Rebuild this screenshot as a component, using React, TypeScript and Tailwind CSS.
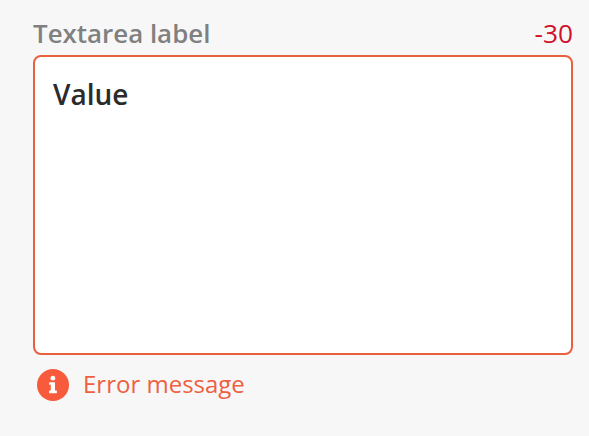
export default function App() {
  return (
    <main className="h-[436px] w-full bg-[#f7f7f7] pt-4 pl-[33px] pr-4 font-['Open_Sans',sans-serif]">
      <div className="flex h-[39px] items-start justify-between leading-9">
        <label htmlFor="message" className="-mt-px text-[25.9px] font-semibold text-[#808080]">Textarea label</label>
        <span className="-mt-px text-[26.3px] text-[#d0112b]">-30</span>
      </div>
      <textarea
        id="message"
        defaultValue="Value"
        className="block h-[300px] w-full resize-none rounded-lg border-2 border-[#e8603f] bg-white px-[18px] pt-[18px] text-[28px] leading-[38px] font-semibold text-[#2b2b2b] outline-none"
      />
      <div className="mt-[11px] flex items-start pl-1 text-[#ee5f42]">
        <svg className="mt-[3px] size-8" viewBox="0 0 32 32" aria-hidden="true">
          <circle cx="16" cy="16" r="16" fill="#f75b3b" />
          <circle cx="15.9" cy="9.2" r="2.4" fill="white" />
          <path d="M12.7 13.2H18v8.4h1.4q.5 0 .5.5v1.6q0 .5-.5.5h-6.8q-.5 0-.5-.5v-1.6q0-.5.5-.5h1.2v-5.8h-1.1q-.5 0-.5-.5v-1.6q0-.5.5-.5z" fill="white" />
        </svg>
        <span className="ml-[14px] text-[24px] leading-9">Error message</span>
      </div>
    </main>
  );
}
